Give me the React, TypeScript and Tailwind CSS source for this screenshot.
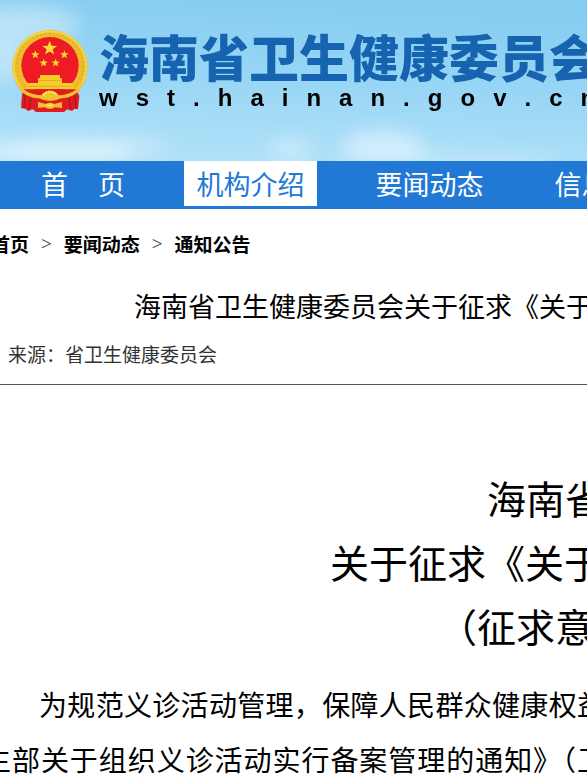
import * as React from "react";
import { clsx } from "clsx";

const SITE_URL = "wst.hainan.gov.cn";

const NAV_ITEMS = [
  { label: "首\u00a0\u00a0\u00a0\u00a0\u00a0页", width: "w-[166px]", active: false },
  { label: "机构介绍", width: "w-[133px]", active: true },
  { label: "要闻动态", width: "w-[133px]", active: false },
  { label: "信息公开", width: "w-[133px]", active: false },
];

const CRUMBS = ["首页", "要闻动态", "通知公告"];

const starPoints = (cx: number, cy: number, r: number) =>
  Array.from({ length: 10 }, (_, i) => {
    const radius = i % 2 === 0 ? r : r * 0.42;
    const angle = (Math.PI / 5) * i - Math.PI / 2;
    return `${cx + radius * Math.cos(angle)},${cy + radius * Math.sin(angle)}`;
  }).join(" ");

const Emblem = () => (
  <svg
    viewBox="36 28 228 246"
    className="h-[82px] w-[76px] shrink-0"
    role="img"
    aria-label="国徽"
  >
    {/* Wheat ring */}
    <path
      d="M150 28C211 28 263 78 263 138C263 177 244 207 216 232L84 232C56 207 37 177 37 138C37 78 89 28 150 28Z"
      fill="#eebd2e"
    />
    <ellipse
      cx="150"
      cy="136"
      rx="99"
      ry="96"
      fill="none"
      stroke="#cf9a22"
      strokeWidth="7"
      strokeDasharray="4 9"
      opacity="0.45"
    />
    <ellipse
      cx="150"
      cy="137"
      rx="109"
      ry="105"
      fill="none"
      stroke="#f9d645"
      strokeWidth="5"
    />
    <ellipse cx="150" cy="134" rx="86" ry="85" fill="#ee1b24" />
    {/* Stars */}
    <g fill="#ffd934">
      <polygon points={starPoints(149, 83, 23)} />
      <polygon points={starPoints(106, 102, 13)} />
      <polygon points={starPoints(193, 102, 13)} />
      <polygon points={starPoints(131, 127, 13)} />
      <polygon points={starPoints(167, 127, 13)} />
    </g>
    {/* Gate */}
    <path
      d="M120 163H180V173H186V187H216L224 206H76L84 187H114V173H120Z"
      fill="#f8cb2f"
    />
    <path d="M116 180H184M82 197H218" stroke="#e3ab28" strokeWidth="3" />
    {/* Ribbons */}
    <path
      d="M72 206H228L238 226L234 266L224 264L216 271L202 266L192 274H108L98 266L84 271L76 264L63 262L66 222Z"
      fill="#e01b22"
    />
    <path
      d="M76 222L72 262M92 232L88 266M224 222L228 262M208 232L212 266"
      stroke="#b3131b"
      strokeWidth="4"
    />
    {/* Wheat stalks and gear */}
    <path
      d="M56 184C70 212 92 222 124 224C136 206 164 206 176 224C208 222 230 212 244 184L240 208C222 228 200 232 178 234C164 242 136 242 122 234C100 232 78 228 60 208Z"
      fill="#f3c22d"
    />
    <path
      d="M130 224C138 210 162 210 170 224"
      fill="none"
      stroke="#ffe95c"
      strokeWidth="7"
      strokeDasharray="6 3"
    />
    <path
      d="M114 244L138 250C144 245 156 245 162 250L186 244V262L164 260C156 266 144 266 136 260L114 262Z"
      fill="#f3c22d"
    />
    <path d="M140 254H160" stroke="#ffe95c" strokeWidth="6" />
  </svg>
);

const Sky = () => (
  <svg
    viewBox="0 0 587 161"
    preserveAspectRatio="none"
    className="absolute inset-0 h-full w-full"
    aria-hidden="true"
  >
    <defs>
      <linearGradient id="sky" x1="0.6" y1="0" x2="0.4" y2="1">
        <stop offset="0" stopColor="#84ccf0" />
        <stop offset="0.5" stopColor="#98d6f5" />
        <stop offset="1" stopColor="#b0e1f8" />
      </linearGradient>
      <filter id="haze" x="-50%" y="-50%" width="200%" height="200%">
        <feGaussianBlur stdDeviation="9" />
      </filter>
    </defs>
    <rect width="587" height="161" fill="url(#sky)" />
    <g fill="#e4f4fd" filter="url(#haze)">
      <ellipse cx="20" cy="25" rx="60" ry="20" opacity="0.5" />
      <ellipse cx="5" cy="60" rx="20" ry="22" opacity="0.5" />
      <ellipse cx="60" cy="152" rx="75" ry="13" opacity="0.8" />
      <ellipse cx="125" cy="146" rx="45" ry="8" opacity="0.45" />
      <ellipse cx="290" cy="150" rx="22" ry="12" opacity="0.5" />
      <ellipse cx="383" cy="148" rx="42" ry="17" opacity="0.7" />
      <ellipse cx="470" cy="160" rx="90" ry="7" opacity="0.4" />
    </g>
  </svg>
);

const Header = () => (
  <header className="relative h-[161px] overflow-hidden">
    <Sky />
    <div className="relative flex gap-3 pt-[30px] pl-3">
      <Emblem />
      <div className="-ml-px shrink-0 whitespace-nowrap">
        <p className="text-[50px] leading-[50px] font-black text-[#1663b0]">
          海南省卫生健康委员会
        </p>
        <p className="flex gap-[18px] pt-1 font-['Liberation_Sans',sans-serif] text-[24px] leading-7 font-bold text-black">
          {SITE_URL.split("").map((letter, i) => (
            <span key={i}>{letter}</span>
          ))}
        </p>
      </div>
    </div>
  </header>
);

const Nav = () => (
  <nav className="flex h-12 items-start overflow-hidden bg-[#2179d5]">
    {NAV_ITEMS.map(({ label, width, active }, i) => (
      <a
        key={label}
        href="#"
        className={clsx(
          "h-[45px] shrink-0 text-center text-[27px] leading-[45px] whitespace-nowrap",
          width,
          i === 1 && "ml-[18px]",
          i > 1 && "ml-[46px]",
          active ? "bg-white text-[#2179d5]" : "text-white"
        )}
      >
        {label}
      </a>
    ))}
  </nav>
);

const Breadcrumb = () => (
  <div className="-ml-[9px] flex gap-3 pt-[21px] text-[19px] leading-7">
    {CRUMBS.map((crumb, i) => (
      <React.Fragment key={crumb}>
        {i > 0 && (
          <span className="font-['Liberation_Serif',serif] text-[#333]">
            &gt;
          </span>
        )}
        <a href="#" className="font-bold">
          {crumb}
        </a>
      </React.Fragment>
    ))}
  </div>
);

export default function App() {
  return (
    <div className="overflow-hidden bg-white font-['Noto_Sans_CJK_SC',sans-serif] text-black">
      <Header />
      <Nav />
      <Breadcrumb />
      <main className="whitespace-nowrap">
        <h1 className="pt-7 pl-[134px] text-[27px] leading-10">
          海南省卫生健康委员会关于征求《关于
        </h1>
        <p className="border-b border-[#555] pt-[14px] pb-4 pl-2 text-[19px] leading-7 text-[#333]">
          来源：省卫生健康委员会
        </p>
        <h2 className="pt-20 text-[39px] leading-[64px]">
          <span className="block pl-[487px]">海南省</span>
          <span className="block pl-[330px]">关于征求《关于</span>
          <span className="block pl-[438px]">（征求意</span>
        </h2>
        <p className="-mr-[18px] -ml-[17px] pt-5 indent-14 text-[28px] leading-[55px] [text-align-last:justify]">
          为规范义诊活动管理，保障人民群众健康权益
          <br />
          生部关于组织义诊活动实行备案管理的通知》（卫
        </p>
      </main>
    </div>
  );
}
